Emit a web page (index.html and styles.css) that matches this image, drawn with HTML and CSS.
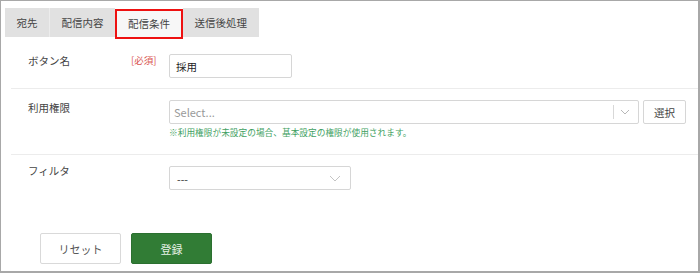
FILE: index.html
```html
<!DOCTYPE html>
<html>

<head>
    <meta charset="UTF-8">
    <title>配信条件</title>
    <link rel="stylesheet" href="styles.css">
</head>

<body>
    <div class="panel">
        <div class="tabs">
            <div class="tab">宛先</div>
            <div class="tab tab-sep">配信内容</div>
            <div class="tab active">配信条件</div>
            <div class="tab">送信後処理</div>
        </div>

        <div class="form">
            <div class="row row-first">
                <div class="label">ボタン名</div>
                <div class="req">[必須]</div>
                <div class="control">
                    <input class="text-input" type="text" value="採用">
                </div>
            </div>

            <div class="row row-second">
                <div class="label">利用権限</div>
                <div class="req"></div>
                <div class="control control-wide">
                    <div class="select-line">
                        <div class="select select-multi">
                            <span class="placeholder">Select...</span>
                            <span class="divider"></span>
                            <svg class="chev" width="10" height="6" viewBox="0 0 10 6">
                                <polyline points="1 1 5 5 9 1" fill="none" stroke="#b8b8b8" stroke-width="1"></polyline>
                            </svg>
                        </div>
                        <button class="pick-btn">選択</button>
                    </div>
                    <div class="help">※利用権限が未設定の場合、基本設定の権限が使用されます。</div>
                </div>
            </div>

            <div class="row row-last">
                <div class="label">フィルタ</div>
                <div class="req"></div>
                <div class="control">
                    <div class="select select-filter">
                        <span class="value">---</span>
                        <svg class="chev" width="12" height="7" viewBox="0 0 12 7">
                            <polyline points="1 1 6 6 11 1" fill="none" stroke="#c4c4c4" stroke-width="1"></polyline>
                        </svg>
                    </div>
                </div>
            </div>
        </div>

        <div class="actions">
            <button class="btn btn-reset">リセット</button>
            <button class="btn btn-submit">登録</button>
        </div>
    </div>
</body>

</html>
```

FILE: styles.css
```css
html,
body {
    margin: 0;
    padding: 0;
    background: #fff;
}

body {
    font-family: "Noto Sans CJK JP", "Noto Sans", sans-serif;
    font-size: 10.5px;
    color: #444;
}

.panel {
    box-sizing: border-box;
    width: 700px;
    height: 273px;
    border: 1px solid #a8a8a8;
    border-right-width: 2px;
    border-bottom-width: 2px;
    overflow: hidden;
}

/* tabs */
.tabs {
    display: flex;
    align-items: flex-start;
    padding: 7px 0 0 4px;
    height: 31px;
}

.tab {
    box-sizing: border-box;
    height: 29px;
    line-height: 29px;
    padding: 0 11.5px;
    background: #e1e1e1;
    color: #444;
    white-space: nowrap;
}

.tab-sep {
    border-left: 1px solid #ececec;
}

.tab.active {
    margin-top: 1px;
    height: 30px;
    line-height: 26px;
    padding: 0 11px;
    background: #f7f7f7;
    border: 2px solid #ee1111;
}

/* form rows */
.form {
    margin-left: 10px;
}

.row {
    display: flex;
    align-items: flex-start;
    padding-left: 17px;
    border-bottom: 1px solid #ececec;
}

.row-first {
    padding-top: 15px;
    padding-bottom: 10px;
}

.row-second {
    padding-top: 11px;
    padding-bottom: 15px;
}

.row-last {
    padding-top: 11px;
    padding-bottom: 0;
    border-bottom: none;
}

.label {
    width: 103px;
    flex-shrink: 0;
    line-height: 14px;
    color: #444;
}

.row-second .label {
    padding-top: 1px;
}

.row-last .label {
    margin-top: -2px;
}

.req {
    width: 38px;
    flex-shrink: 0;
    font-size: 9.5px;
    line-height: 12px;
    color: #d9534f;
}

.control-wide {
    flex-grow: 1;
    padding-right: 12px;
}

.text-input {
    box-sizing: border-box;
    width: 123px;
    height: 24px;
    margin: 0;
    padding: 0 6px;
    border: 1px solid #d6d6d6;
    border-radius: 2px;
    font-family: inherit;
    font-size: 10.5px;
    color: #222;
    outline: none;
}

.select-line {
    display: flex;
    gap: 4px;
}

.select {
    box-sizing: border-box;
    height: 24px;
    display: flex;
    align-items: center;
    border: 1px solid #d6d6d6;
    border-radius: 2px;
    padding: 0 6px;
    background: #fff;
}

.select-multi {
    flex-grow: 1;
    padding-left: 4px;
}

.placeholder {
    flex-grow: 1;
    color: #999;
    font-size: 11px;
}

.divider {
    width: 1px;
    height: 14px;
    background: #d8d8d8;
    margin-right: 6px;
}

.select-multi .chev {
    margin-right: 2px;
}

.select-filter {
    width: 182px;
    padding-left: 7px;
    padding-right: 9px;
}

.value {
    flex-grow: 1;
    color: #333;
}

.pick-btn {
    box-sizing: border-box;
    width: 43px;
    height: 24px;
    margin: 0;
    padding: 0;
    border: 1px solid #d6d6d6;
    border-radius: 2px;
    background: #fff;
    font-family: inherit;
    font-size: 10.5px;
    color: #444;
}

.help {
    margin-top: 3px;
    font-size: 8.7px;
    line-height: 12px;
    color: #3f9f62;
    white-space: nowrap;
}

/* bottom buttons */
.actions {
    display: flex;
    gap: 10px;
    padding: 43px 0 0 39px;
}

.btn {
    box-sizing: border-box;
    width: 81px;
    height: 31px;
    margin: 0;
    padding: 0;
    border-radius: 2px;
    font-family: inherit;
    font-size: 11px;
}

.btn-reset {
    background: #fff;
    border: 1px solid #d9d9d9;
    color: #555;
}

.btn-submit {
    background: #317c35;
    border: 1px solid #2b7030;
    color: #e6f2e6;
}
```
